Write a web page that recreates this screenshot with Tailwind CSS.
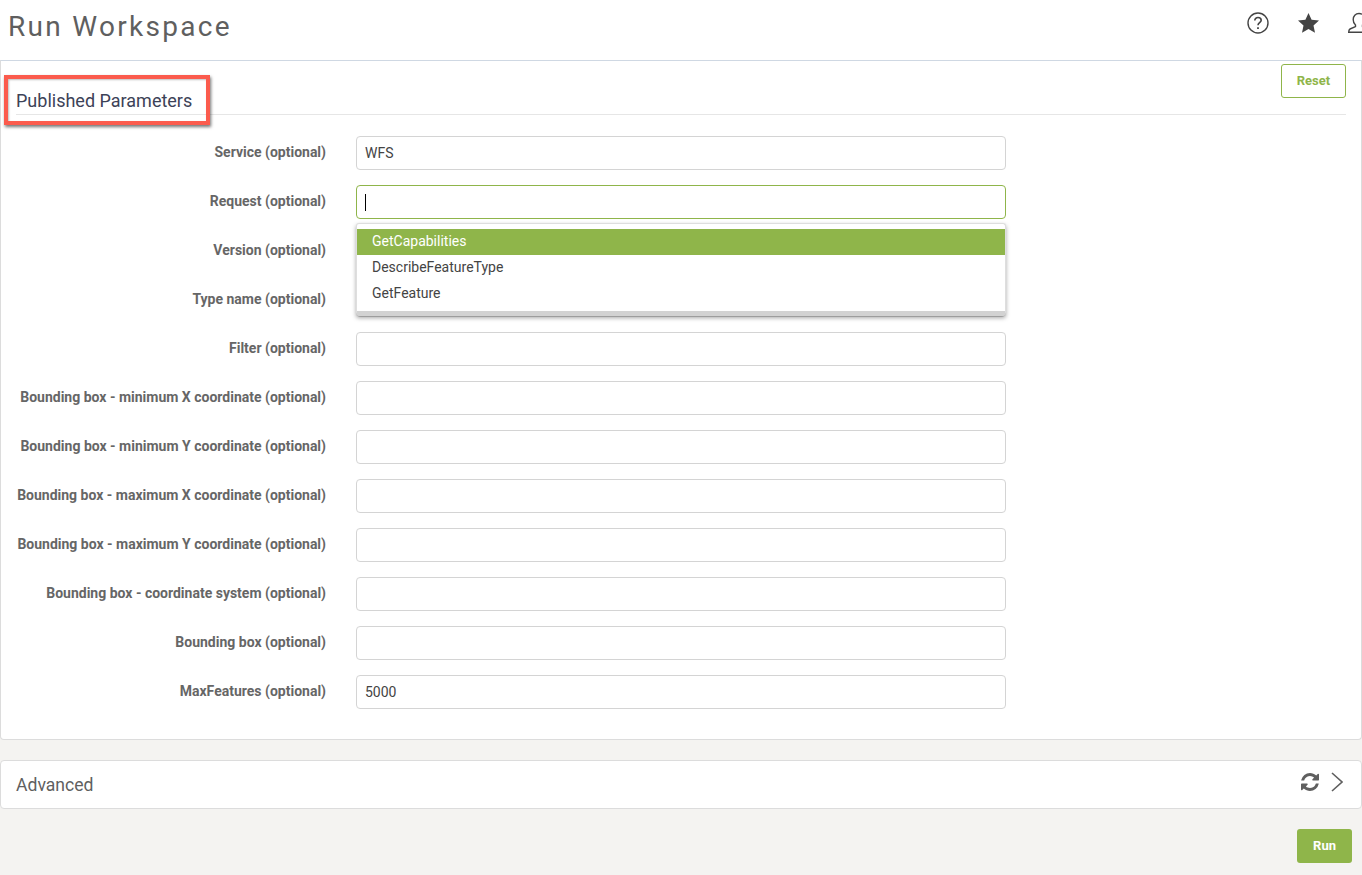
<!DOCTYPE html>
<html lang="en">
<head>
    <meta charset="UTF-8">
    <meta name="viewport" content="width=device-width, initial-scale=1.0">
    <title>Run Workspace</title>
    <script src="https://cdn.jsdelivr.net/npm/@tailwindcss/browser@4"></script>
</head>
<body class="bg-[#f4f3f1] h-[875px] overflow-hidden font-['Roboto',sans-serif] relative">
    <header class="h-[60px] bg-white flex items-start justify-between overflow-hidden">
        <h1 class="ml-[8px] mt-[10px] text-[28px] leading-[34px] tracking-[2.3px] text-[#5f5f5f]">Run Workspace</h1>
        <div class="flex items-center text-[#444]">
            <svg class="w-[22px] h-[22px] mt-[12px]" viewBox="0 0 22 22" fill="none" stroke="#444" stroke-width="1.4">
                <circle cx="11" cy="11" r="10"/>
                <path d="M7.8 8.6c0-1.9 1.4-3.1 3.2-3.1s3.2 1.1 3.2 2.8c0 2.4-3.2 2.5-3.2 5" stroke-width="1.6"/>
                <path d="M11 15.2v1.9" stroke-width="1.8"/>
            </svg>
            <svg class="w-[21px] h-[20px] ml-[29px] mt-[12px]" viewBox="0 0 21 20" fill="#444">
                <path d="M10.5 0l3.1 6.7 7.4.8-5.5 5 1.5 7.3-6.5-3.7-6.5 3.7 1.500-7.300L0 7.500l7.400-.8z"/>
            </svg>
            <svg class="w-[22px] h-[22px] ml-[29px] mr-[-8px] mt-[12px]" viewBox="0 0 22 22" fill="none" stroke="#444" stroke-width="1.4">
                <path d="M7.500 13c-1.600-1.300-2.300-3.400-2.300-5.600C5.200 4 7.500 1.500 11 1.500s5.800 2.500 5.800 5.900c0 2.200-.7 4.300-2.300 5.600v1.600l5.500 2.400c1 .5 1.300 1.100 1.300 3.300H.7c0-2.200.3-2.800 1.300-3.300l5.500-2.400z"/>
            </svg>
        </div>
    </header>

    <main>
        <section class="h-[680px] bg-white border border-[#dcdcdc] border-t-[#cfd8e3] rounded-b-[4px] px-[15px]">
            <div class="h-[54px] border-b border-[#e6e6e6] flex items-start justify-between">
                <h2 class="mt-[28px] text-[18px] leading-[24px] text-[#3c4257]">Published Parameters</h2>
                <button class="mt-[3px] w-[65px] h-[34px] border border-[#8fb54a] rounded-[3px] text-[13px] font-bold text-[#8fb54a]">Reset</button>
            </div>

            <form class="mt-[21px] flex flex-col gap-[15px] text-[14px]">
                <div class="flex items-center">
                    <label class="w-[310px] mb-[2px] text-right font-bold text-[14px] text-[#666]">Service (optional)</label>
                    <input class="ml-[30px] w-[650px] h-[34px] px-[8px] border border-[#d4d4d4] rounded-[4px] text-[#444]" value="WFS">
                </div>
                <div class="flex items-center relative">
                    <label class="w-[310px] mb-[2px] text-right font-bold text-[14px] text-[#666]">Request (optional)</label>
                    <div class="ml-[30px] w-[650px] h-[34px] px-[8px] border border-[#8fb54a] rounded-[4px] flex items-center">
                        <span class="w-px h-[17px] bg-black"></span>
                    </div>
                </div>
                <div class="flex items-center">
                    <label class="w-[310px] mb-[2px] text-right font-bold text-[14px] text-[#666]">Version (optional)</label>
                    <input class="ml-[30px] w-[650px] h-[34px] px-[8px] border border-[#d4d4d4] rounded-[4px] text-[#444]">
                </div>
                <div class="flex items-center">
                    <label class="w-[310px] mb-[2px] text-right font-bold text-[14px] text-[#666]">Type name (optional)</label>
                    <input class="ml-[30px] w-[650px] h-[34px] px-[8px] border border-[#d4d4d4] rounded-[4px] text-[#444]">
                </div>
                <div class="flex items-center">
                    <label class="w-[310px] mb-[2px] text-right font-bold text-[14px] text-[#666]">Filter (optional)</label>
                    <input class="ml-[30px] w-[650px] h-[34px] px-[8px] border border-[#d4d4d4] rounded-[4px] text-[#444]">
                </div>
                <div class="flex items-center">
                    <label class="w-[310px] mb-[2px] text-right font-bold text-[14px] text-[#666]">Bounding box - minimum X coordinate (optional)</label>
                    <input class="ml-[30px] w-[650px] h-[34px] px-[8px] border border-[#d4d4d4] rounded-[4px] text-[#444]">
                </div>
                <div class="flex items-center">
                    <label class="w-[310px] mb-[2px] text-right font-bold text-[14px] text-[#666]">Bounding box - minimum Y coordinate (optional)</label>
                    <input class="ml-[30px] w-[650px] h-[34px] px-[8px] border border-[#d4d4d4] rounded-[4px] text-[#444]">
                </div>
                <div class="flex items-center">
                    <label class="w-[310px] mb-[2px] text-right font-bold text-[14px] text-[#666]">Bounding box - maximum X coordinate (optional)</label>
                    <input class="ml-[30px] w-[650px] h-[34px] px-[8px] border border-[#d4d4d4] rounded-[4px] text-[#444]">
                </div>
                <div class="flex items-center">
                    <label class="w-[310px] mb-[2px] text-right font-bold text-[14px] text-[#666]">Bounding box - maximum Y coordinate (optional)</label>
                    <input class="ml-[30px] w-[650px] h-[34px] px-[8px] border border-[#d4d4d4] rounded-[4px] text-[#444]">
                </div>
                <div class="flex items-center">
                    <label class="w-[310px] mb-[2px] text-right font-bold text-[14px] text-[#666]">Bounding box - coordinate system (optional)</label>
                    <input class="ml-[30px] w-[650px] h-[34px] px-[8px] border border-[#d4d4d4] rounded-[4px] text-[#444]">
                </div>
                <div class="flex items-center">
                    <label class="w-[310px] mb-[2px] text-right font-bold text-[14px] text-[#666]">Bounding box (optional)</label>
                    <input class="ml-[30px] w-[650px] h-[34px] px-[8px] border border-[#d4d4d4] rounded-[4px] text-[#444]">
                </div>
                <div class="flex items-center">
                    <label class="w-[310px] mb-[2px] text-right font-bold text-[14px] text-[#666]">MaxFeatures (optional)</label>
                    <input class="ml-[30px] w-[650px] h-[34px] px-[8px] border border-[#d4d4d4] rounded-[4px] text-[#444]" value="5000">
                </div>
            </form>
        </section>

        <section class="mt-[20px] h-[49px] bg-white border border-[#dcdcdc] rounded-[4px] pl-[15px] pr-[18px] flex items-center justify-between">
            <h2 class="mt-[2px] text-[17.6px] text-[#5f5f5f]">Advanced</h2>
            <div class="flex items-center gap-[12px] mb-[6px]">
                <svg class="w-[18px] h-[18px]" viewBox="0 0 1536 1536" fill="#5f5f5f">
                    <path d="M1511 928q0 5-1 7-64 268-268 434.500T764 1536q-146 0-282.500-55T238 1324l-129 129q-19 19-45 19t-45-19-19-45V960q0-26 19-45t45-19h448q26 0 45 19t19 45-19 45l-137 137q71 66 161 102t187 36q134 0 250-65t186-179q11-17 53-117 8-23 30-23h192q13 0 22.500 9.500t9.500 22.500zm25-800v448q0 26-19 45t-45 19h-448q-26 0-45-19t-19-45 19-45l138-138q-148-137-349-137-134 0-250 65T332 500q-11 17-53 117-8 23-30 23H50q-13 0-22.500-9.500T18 608v-7q65-268 270-434.500T768 0q146 0 284 55.500T1297 212l130-129q19-19 45-19t45 19 19 45z"/>
                </svg>
                <svg class="w-[12px] h-[20px]" viewBox="0 0 12 20" fill="none" stroke="#5f5f5f" stroke-width="1.6">
                    <path d="M1 1l10 9-10 9"/>
                </svg>
            </div>
        </section>

        <div class="mt-[20px] flex justify-end pr-[10px]">
            <button class="w-[55px] h-[34px] bg-[#8fb54a] rounded-[3px] text-[13px] font-bold text-white">Run</button>
        </div>
    </main>

    <!-- dropdown list over the Version / Type name rows -->
    <ul class="absolute left-[356px] top-[223px] w-[650px] h-[93px] bg-white border border-[#dedede] rounded-[3px] pt-[5px] text-[14px] leading-[24px] text-[#444] border-b-[5px] border-b-[#d2d2d2] shadow-[0_2px_4px_rgba(0,0,0,0.35)]">
        <li class="h-[26px] pl-[15px] bg-[#8fb54a] text-white">GetCapabilities</li>
        <li class="h-[26px] pl-[15px]">DescribeFeatureType</li>
        <li class="h-[26px] pl-[15px]">GetFeature</li>
    </ul>

    <!-- annotation box drawn on the screenshot -->
    <div class="absolute left-[4px] top-[75px] w-[206px] h-[50px] border-[4px] border-[#fb5b4d] shadow-[1px_2px_3px_rgba(0,0,0,0.55),inset_1px_1px_2px_rgba(0,0,0,0.25)]"></div>
</body>
</html>
